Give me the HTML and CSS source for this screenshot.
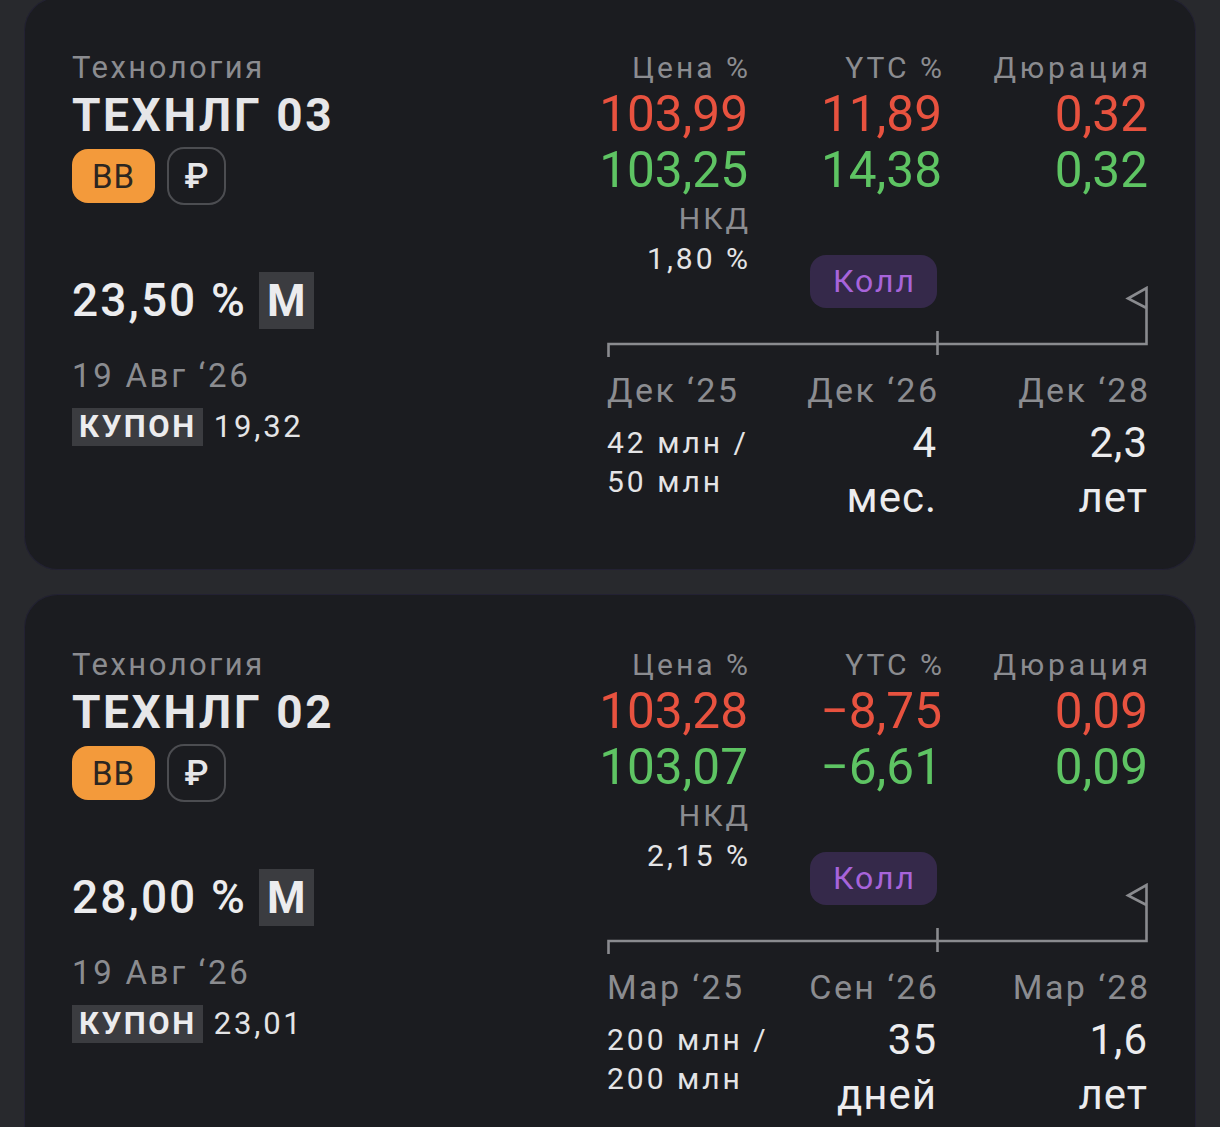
FILE: index.html
```html
<!DOCTYPE html>
<html lang="ru">
<head>
<meta charset="utf-8">
<title>Облигации</title>
<link rel="stylesheet" href="styles.css">
</head>
<body>
<div class="list">

  <section class="card">
    <div class="info">
      <div class="sector">Технология</div>
      <div class="ticker">ТЕХНЛГ 03</div>
      <div class="badges">
        <span class="rating">BB</span>
        <span class="currency">₽</span>
      </div>
      <div class="rate-row">
        <span class="rate">23,50 %</span>
        <span class="freq">M</span>
      </div>
      <div class="date">19 Авг ‘26</div>
      <div class="coupon-row">
        <span class="coupon-tag">КУПОН</span>
        <span class="coupon-val">19,32</span>
      </div>
    </div>
    <div class="market">
      <div class="quotes">
        <div class="head">Цена %</div>
        <div class="head">YTC %</div>
        <div class="head wide">Дюрация</div>
        <div class="num red">103,99</div>
        <div class="num red">11,89</div>
        <div class="num red">0,32</div>
        <div class="num green">103,25</div>
        <div class="num green">14,38</div>
        <div class="num green">0,32</div>
      </div>
      <div class="mid">
        <div class="nkd">
          <div class="head">НКД</div>
          <div class="nkd-val">1,80 %</div>
        </div>
        <span class="call">Колл</span>
      </div>
      <svg class="timeline" width="541" height="72" viewBox="0 0 541 72">
        <path d="M1.5 71 V58 H539.5 V2 L521 12.5 L539.5 22" fill="none" stroke="#8a8b8f" stroke-width="2.6" stroke-linejoin="miter"/>
        <path d="M330.5 45 V69" fill="none" stroke="#8a8b8f" stroke-width="2.6"/>
      </svg>
      <div class="dates">
        <div class="d-label">Дек ‘25</div>
        <div class="d-label right">Дек ‘26</div>
        <div class="d-label right">Дек ‘28</div>
        <div class="volume">42 млн /<br>50 млн</div>
        <div class="term right">4<br>мес.</div>
        <div class="term right">2,3<br>лет</div>
      </div>
    </div>
  </section>

  <section class="card">
    <div class="info">
      <div class="sector">Технология</div>
      <div class="ticker">ТЕХНЛГ 02</div>
      <div class="badges">
        <span class="rating">BB</span>
        <span class="currency">₽</span>
      </div>
      <div class="rate-row">
        <span class="rate">28,00 %</span>
        <span class="freq">M</span>
      </div>
      <div class="date">19 Авг ‘26</div>
      <div class="coupon-row">
        <span class="coupon-tag">КУПОН</span>
        <span class="coupon-val">23,01</span>
      </div>
    </div>
    <div class="market">
      <div class="quotes">
        <div class="head">Цена %</div>
        <div class="head">YTC %</div>
        <div class="head wide">Дюрация</div>
        <div class="num red">103,28</div>
        <div class="num red">−8,75</div>
        <div class="num red">0,09</div>
        <div class="num green">103,07</div>
        <div class="num green">−6,61</div>
        <div class="num green">0,09</div>
      </div>
      <div class="mid">
        <div class="nkd">
          <div class="head">НКД</div>
          <div class="nkd-val">2,15 %</div>
        </div>
        <span class="call">Колл</span>
      </div>
      <svg class="timeline" width="541" height="72" viewBox="0 0 541 72">
        <path d="M1.5 71 V58 H539.5 V2 L521 12.5 L539.5 22" fill="none" stroke="#8a8b8f" stroke-width="2.6" stroke-linejoin="miter"/>
        <path d="M330.5 45 V69" fill="none" stroke="#8a8b8f" stroke-width="2.6"/>
      </svg>
      <div class="dates">
        <div class="d-label">Мар ‘25</div>
        <div class="d-label right">Сен ‘26</div>
        <div class="d-label right">Мар ‘28</div>
        <div class="volume">200 млн /<br>200 млн</div>
        <div class="term right">35<br>дней</div>
        <div class="term right">1,6<br>лет</div>
      </div>
    </div>
  </section>

</div>
</body>
</html>
```

FILE: styles.css
```css
* { box-sizing: border-box; }

html, body {
  margin: 0;
  padding: 0;
  background: #28292d;
}

body {
  font-family: Roboto, "Noto Sans", "DejaVu Sans", sans-serif;
  color: #e4e4e6;
  overflow: hidden;
}

.list {
  display: flex;
  flex-direction: column;
  gap: 24px;
  padding: 0 24px;
  margin-top: -3px;
}

.card {
  display: flex;
  height: 573px;
  background: #1b1c20;
  border-radius: 34px;
  padding: 51px 48px 0 48px;
  box-shadow: inset 0 0 0 1px rgba(70, 60, 140, 0.18);
}

/* ---------- left info column ---------- */
.info {
  flex: 1;
  display: flex;
  flex-direction: column;
  align-items: flex-start;
}

.sector {
  font-size: 31px;
  line-height: 40px;
  letter-spacing: 2.5px;
  color: #8b8c90;
}

.ticker {
  font-size: 46px;
  line-height: 54px;
  font-weight: 700;
  letter-spacing: 2.6px;
  color: #e6e6e8;
}

.badges {
  display: flex;
  align-items: center;
  gap: 12px;
  margin-top: 5px;
  height: 58px;
}

.rating {
  display: flex;
  align-items: center;
  justify-content: center;
  width: 83px;
  height: 54px;
  border-radius: 16px;
  background: #f39a3b;
  color: #2c2621;
  font-size: 33px;
  letter-spacing: 1px;
}

.currency {
  display: flex;
  align-items: center;
  justify-content: center;
  width: 59px;
  height: 58px;
  border-radius: 17px;
  border: 2px solid #4c4d51;
  color: #e6e6e8;
  font-size: 35px;
  font-weight: 500;
}

.rate-row {
  display: flex;
  align-items: center;
  gap: 12px;
  margin-top: 67px;
  height: 57px;
}

.rate {
  font-size: 46px;
  line-height: 57px;
  font-weight: 500;
  letter-spacing: 2.1px;
  color: #ececee;
}

.freq {
  display: flex;
  align-items: center;
  justify-content: center;
  width: 55px;
  height: 57px;
  background: #3b3c40;
  font-size: 44px;
  font-weight: 700;
  color: #ececee;
}

.date {
  margin-top: 27px;
  font-size: 33px;
  line-height: 40px;
  letter-spacing: 2.7px;
  color: #8b8c90;
}

.coupon-row {
  display: flex;
  align-items: center;
  gap: 11px;
  margin-top: 12px;
}

.coupon-tag {
  height: 38px;
  line-height: 38px;
  padding: 0 6px 0 7px;
  background: #3b3c40;
  font-size: 31px;
  font-weight: 700;
  letter-spacing: 2.6px;
  color: #ececee;
}

.coupon-val {
  font-size: 31px;
  line-height: 38px;
  letter-spacing: 2.8px;
  color: #e4e4e6;
}

/* ---------- right market panel ---------- */
.market {
  width: 541px;
  display: flex;
  flex-direction: column;
}

.quotes {
  display: grid;
  grid-template-columns: 141px 194px 206px;
  grid-template-rows: 40px 53px 58px;
  justify-items: end;
}

.head {
  font-size: 30px;
  line-height: 40px;
  letter-spacing: 3px;
  margin-right: -3px;
  color: #8b8c90;
  white-space: nowrap;
}
.head.wide { letter-spacing: 3.8px; margin-right: -3.8px; }

.num {
  font-size: 49.5px;
  white-space: nowrap;
}
.quotes .num:nth-child(-n+6) { line-height: 53px; }
.quotes .num:nth-child(n+7) { line-height: 58px; }

.red { color: #e8523f; }
.green { color: #5ec463; }

.mid {
  display: grid;
  grid-template-columns: 141px 189px 1fr;
  align-items: start;
}

.nkd {
  text-align: right;
}

.nkd-val {
  font-size: 30px;
  line-height: 40px;
  letter-spacing: 3px;
  margin-right: -3px;
  color: #e4e4e6;
  white-space: nowrap;
}

.call {
  justify-self: end;
  margin-top: 56px;
  width: 127px;
  height: 53px;
  border-radius: 16px;
  background: #35294a;
  color: #a764da;
  font-size: 32px;
  line-height: 53px;
  letter-spacing: 2px;
  text-indent: 2px;
  text-align: center;
}

.timeline {
  display: block;
  margin-top: -22px;
}

.dates {
  display: grid;
  grid-template-columns: 165px 165px 211px;
  margin-top: 10px;
}

.d-label {
  font-size: 34px;
  line-height: 44px;
  letter-spacing: 2.4px;
  color: #8b8c90;
  white-space: nowrap;
}

.right { text-align: right; }
.d-label.right { margin-right: -2.4px; }

.volume {
  padding-top: 11px;
  font-size: 30px;
  line-height: 39px;
  letter-spacing: 3px;
  color: #e4e4e6;
  white-space: nowrap;
}

.term {
  padding-top: 3px;
  font-size: 42px;
  line-height: 55px;
  letter-spacing: 1px;
  color: #ececee;
}
```
